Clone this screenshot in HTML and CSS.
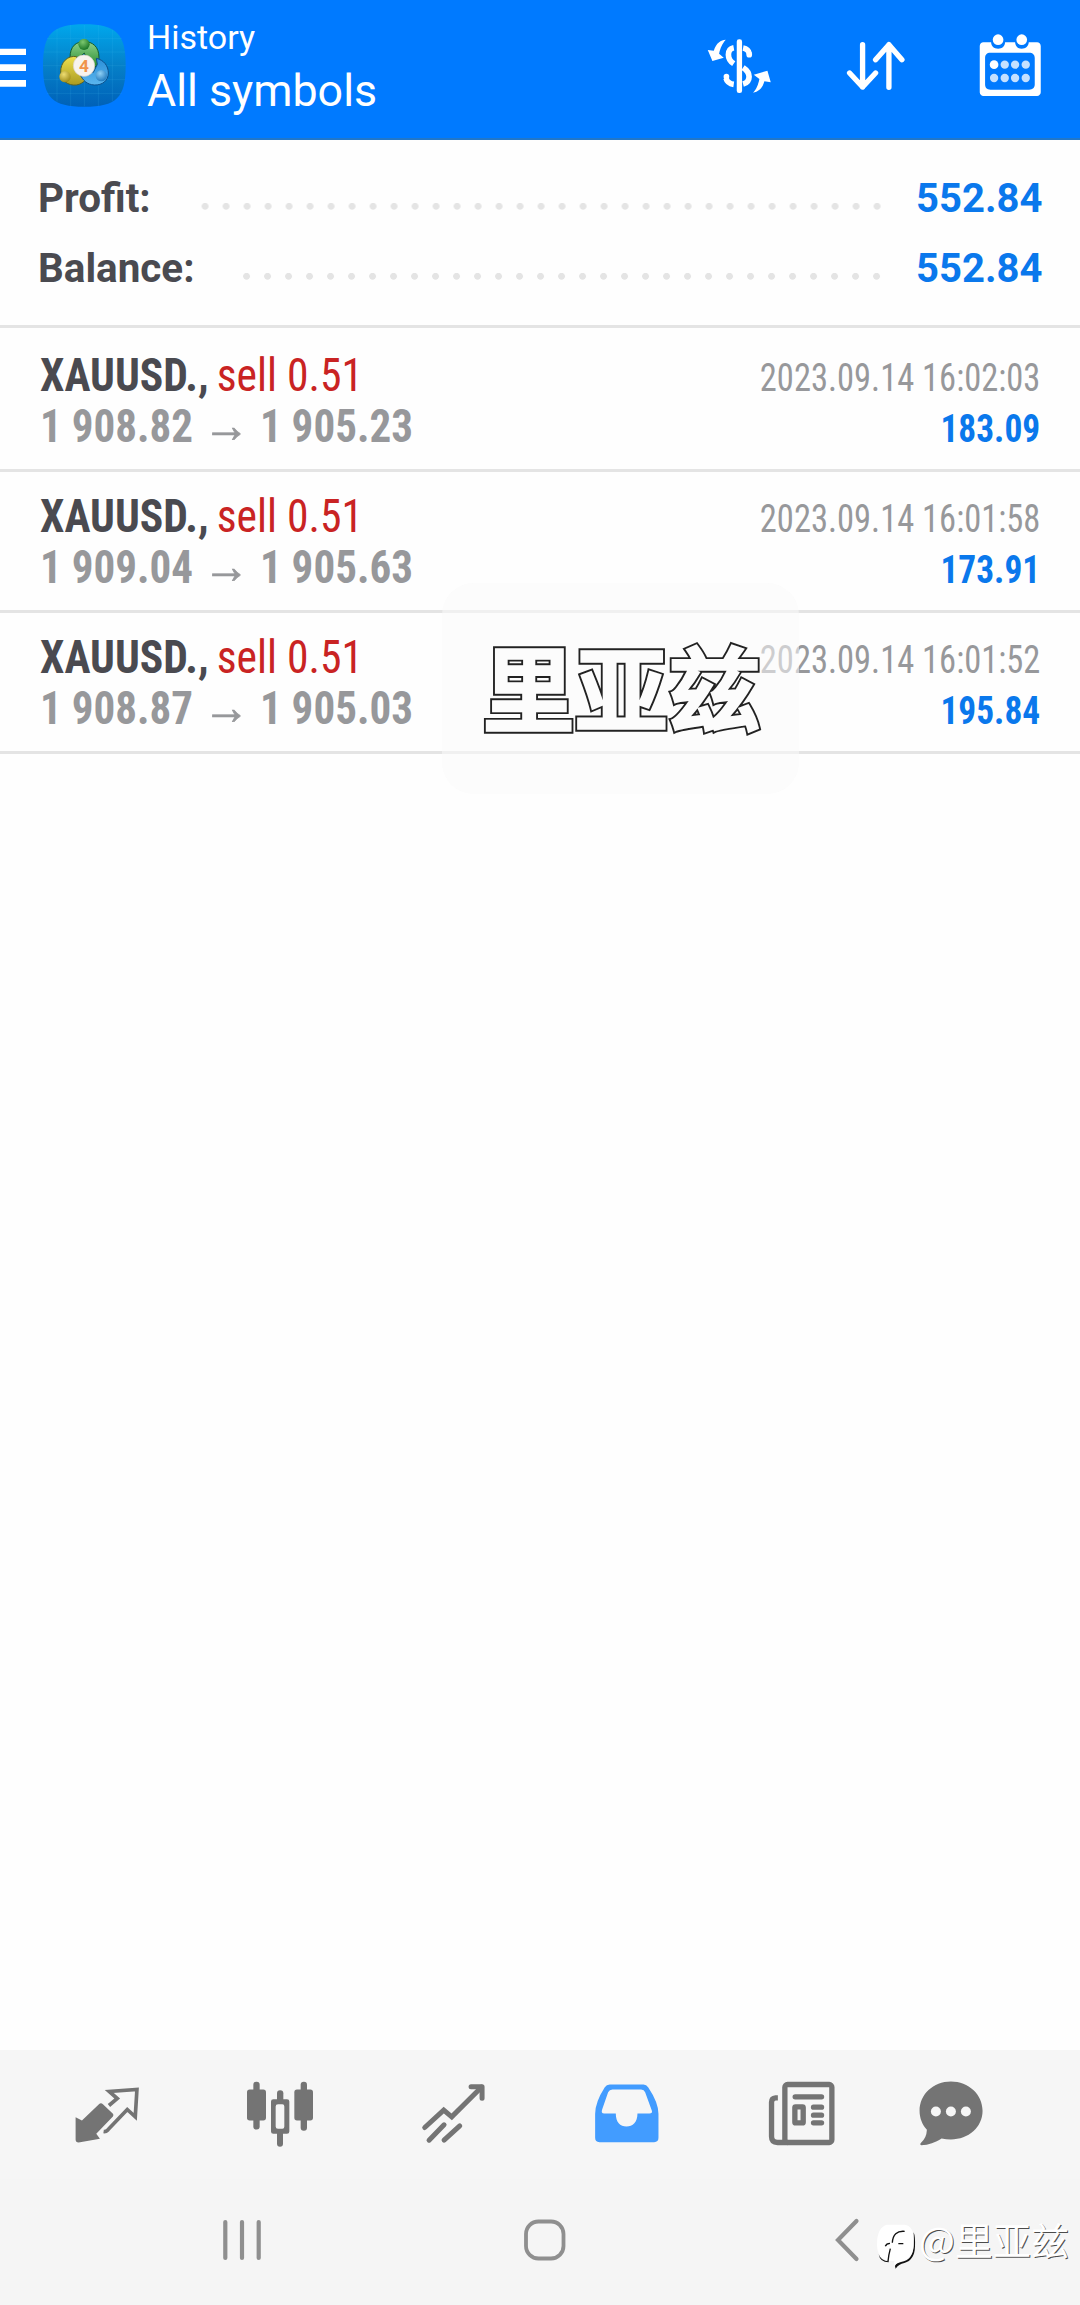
FILE: index.html
```html
<!DOCTYPE html>
<html lang="en">
<head>
<meta charset="utf-8">
<title>History</title>
<link rel="stylesheet" href="styles.css">
</head>
<body>
<div class="app">
  <header class="appbar">
    <svg class="menu" viewBox="0 132 78 144"><path fill="#fff" d="M0 146h78v19H0zM0 193h78v20H0zM0 240h78v20H0z"/></svg>
    <svg class="logo" viewBox="38 43 249 249">
      <defs>
        <linearGradient id="tile" x1="0" y1="0" x2="0" y2="1"><stop offset="0" stop-color="#00a7ec"/><stop offset=".5" stop-color="#0580c8"/><stop offset="1" stop-color="#0061b8"/></linearGradient>
        <linearGradient id="green" x1="0" y1="0" x2="0" y2="1"><stop offset="0" stop-color="#8fd18a"/><stop offset="1" stop-color="#238a2c"/></linearGradient>
        <linearGradient id="gold" x1="0" y1="0" x2="0" y2="1"><stop offset="0" stop-color="#efe04e"/><stop offset="1" stop-color="#a99a20"/></linearGradient>
        <linearGradient id="sky" x1="0" y1="0" x2="0" y2="1"><stop offset="0" stop-color="#2b8fd8"/><stop offset="1" stop-color="#5bb6ee"/></linearGradient>
        <radialGradient id="gb" cx=".4" cy=".3" r=".8"><stop offset="0" stop-color="#7cc86f"/><stop offset="1" stop-color="#0c6a1c"/></radialGradient>
        <radialGradient id="yb" cx=".4" cy=".3" r=".8"><stop offset="0" stop-color="#eedd72"/><stop offset="1" stop-color="#94820f"/></radialGradient>
        <radialGradient id="bb" cx=".4" cy=".3" r=".8"><stop offset="0" stop-color="#8fd0f5"/><stop offset="1" stop-color="#1470b8"/></radialGradient>
      </defs>
      <path fill="url(#tile)" d="M162 44C258 44 286 72 286 168S258 291 162 291 38 264 38 168 66 44 162 44z"/>
      <path fill="none" stroke="#4cc0f0" stroke-opacity=".22" stroke-width="2" d="M80 58v218M121 46v244M162 46v244M204 46v244M246 60v214M50 86h224M40 127h244M38 168h248M40 210h244M50 251h224"/>
      <path fill="url(#green)" stroke="#165c2a" stroke-width="3" d="M119 145C119 108 138 96 162 96s44 14 44 48c0 16-6 24-15 31l-20-23-9-22-12 10-18 8z"/>
      <path fill="url(#gold)" stroke="#5d6322" stroke-width="3" d="M139 141c-27-5-49 17-48 47 0 24 22 41 47 38 13-2 20-8 26-14l-22-23z"/>
      <path fill="url(#sky)" stroke="#0c4f8a" stroke-width="3" d="M198 146c23 5 36 23 36 44 0 23-18 37-42 36-22-1-36-15-43-33l40-5 12-24z"/>
      <circle cx="161" cy="104" r="17" fill="url(#gb)"/>
      <circle cx="104" cy="201" r="17" fill="url(#yb)"/>
      <circle cx="213" cy="198" r="17" fill="url(#bb)"/>
      <circle cx="161" cy="168" r="32" fill="#f7f3ee" stroke="#d8d2c8" stroke-width="2"/>
      <text class="logo-digit" x="161" y="187" text-anchor="middle">4</text>
    </svg>
    <div class="titles">
      <div class="title">History</div>
      <div class="subtitle">All symbols</div>
    </div>
    <div class="actions">
      <svg viewBox="69.75 102 216 216" fill="#fff">
        <path d="M138 119c-15 1-28 9-36 33l-18-2 14 33 34-10-14-12c4-18 9-29 20-42z"/>
        <path d="M220 278c15-3 28-12 34-34l19 3-10-35-41 12 17 13c-4 18-8 29-19 41z"/>
        <rect x="171" y="118" width="16" height="161" rx="7"/>
        <path fill="none" stroke="#fff" stroke-width="17" d="M162 143c-11 2-16 9-16 21 0 13 7 21 16 27M190 144c11 2 17 8 19 18M190 203c12 8 18 14 18 27 0 12-7 19-18 22M162 253c-14-2-21-10-23-18"/>
        <circle cx="208.500" cy="164" r="8.500"/><circle cx="140" cy="230" r="8.500"/>
      </svg>
      <svg viewBox="476.25 102 216 216" fill="none" stroke="#fff" stroke-width="16" stroke-linecap="round" stroke-linejoin="round"><path d="M547 134v127M508 219l39 42 39-42M626 262V134M586 179l40-45 39 45"/></svg>
      <svg viewBox="882.75 102 216 216">
        <path fill="#fff" fill-rule="evenodd" d="M911 127h23c1 12 8 19 21 19s20-7 21-19h30c1 12 8 19 20 19s20-7 21-19h25c6 0 11 5 11 11v139c0 6-5 11-11 11H911c-6 0-11-5-11-11V138c0-6 5-11 11-11zm21 31c-11 0-16 6-16 16v79c0 10 5 16 16 16h116c11 0 17-6 17-16v-79c0-10-6-16-17-16z"/>
        <circle cx="955" cy="119" r="16" fill="#fff"/><circle cx="1026" cy="119" r="16" fill="#fff"/>
        <circle cx="943" cy="194" r="13" fill="#fff"/>
        <g fill="#c4e0ff"><circle cx="975" cy="194" r="12.500"/><circle cx="1006" cy="194" r="12.500"/><circle cx="1038" cy="194" r="12.500"/><circle cx="943" cy="234" r="12.500"/><circle cx="975" cy="234" r="12.500"/><circle cx="1006" cy="234" r="12.500"/><circle cx="1038" cy="234" r="12.500"/></g>
      </svg>
    </div>
  </header>

  <section class="summary">
    <div class="sum-row"><span class="sum-label">Profit:</span><span class="dots"></span><span class="sum-value">552.84</span></div>
    <div class="sum-row"><span class="sum-label">Balance:</span><span class="dots"></span><span class="sum-value">552.84</span></div>
  </section>

  <main class="deals">
    <article class="deal">
      <div class="line"><span class="name"><b>XAUUSD.,</b> <span class="side">sell 0.51</span></span><span class="date">2023.09.14 16:02:03</span></div>
      <div class="line"><span class="price">1 908.82 <span class="arrow">→</span> 1 905.23</span><span class="profit">183.09</span></div>
    </article>
    <article class="deal">
      <div class="line"><span class="name"><b>XAUUSD.,</b> <span class="side">sell 0.51</span></span><span class="date">2023.09.14 16:01:58</span></div>
      <div class="line"><span class="price">1 909.04 <span class="arrow">→</span> 1 905.63</span><span class="profit">173.91</span></div>
    </article>
    <article class="deal">
      <div class="line"><span class="name"><b>XAUUSD.,</b> <span class="side">sell 0.51</span></span><span class="date">2023.09.14 16:01:52</span></div>
      <div class="line"><span class="price">1 908.87 <span class="arrow">→</span> 1 905.03</span><span class="profit">195.84</span></div>
    </article>
  </main>

  <nav class="tabs">
    <svg viewBox="94.200 115.500 216 216">
      <path fill="#747474" d="M108 230l19 10 51-49q6-5 12 0l30 29q3 4 0 8l-50 52 11 15-64 11q-9 0-9-9z"/>
      <path fill="none" stroke="#747474" stroke-width="11" stroke-linejoin="miter" d="M208 195l25-21-24-21 83-6-5 82-24-22-58 61q-6 6-13 5"/>
    </svg>
    <svg viewBox="615 115.500 216 216" fill="#747474">
      <rect x="640" y="124" width="19" height="143" rx="9"/><rect x="621" y="147" width="57" height="93" rx="8"/>
      <rect x="782" y="124" width="19" height="147" rx="9"/><rect x="763" y="147" width="56" height="93" rx="8"/>
      <rect x="711" y="149" width="19" height="40" rx="9"/><rect x="711" y="270" width="18" height="49" rx="9"/>
      <path fill-rule="evenodd" d="M700 176h41q7 0 7 7v90q0 7-7 7h-41q-7 0-7-7v-90q0-7 7-7zm14 15q-7 0-7 7v60q0 7 7 7h13q6 0 6-7v-60q0-7-6-7z"/>
    </svg>
    <svg viewBox="1135.800 115.500 216 216" fill="none" stroke="#747474" stroke-width="15" stroke-linecap="round" stroke-linejoin="round">
      <path stroke-linejoin="miter" d="M1153 261l57-52 24 20 89-89"/><path d="M1292 139h33v34"/><path d="M1166 299l45-46M1211 299l47-43"/>
    </svg>
    <svg viewBox="156.600 115.500 216 216">
      <path fill="#429cff" fill-rule="evenodd" d="M210 132h101q9 0 14 8 31 46 31 80v72q0 13-13 13H179q-13 0-13-13v-72q0-35 29-80 5-8 15-8zm8 15q-9 0-13 8l-18 52q-4 12 6 12h35c0 26 13 39 32 39s33-13 33-39h36q10 0 7-9l-20-55q-3-8-12-8z"/>
    </svg>
    <svg viewBox="677.400 115.500 216 216" fill="none" stroke="#747474" stroke-width="16">
      <rect x="734" y="132" width="141" height="174" rx="8"/><path d="M742 306h-30q-18 0-18-18V185q0-12 12-13h7"/>
      <rect x="764" y="199" width="25" height="48" rx="2"/>
      <path stroke-linecap="round" d="M765 169h79M820 200h24M820 224h24M820 247h24"/>
    </svg>
    <svg viewBox="1125.300 115.500 216 216">
      <path fill="#747474" d="M1233 123c53 0 95 39 95 88s-42 86-95 86q-14 0-28-3c-19 12-38 20-61 20q-5-2-2-6 18-14 19-40c-14-15-22-35-22-57 0-49 41-88 94-88z"/>
      <g fill="#f6f6f6"><circle cx="1188" cy="213" r="15"/><circle cx="1233" cy="213" r="15"/><circle cx="1278" cy="213" r="15"/></g>
    </svg>
  </nav>

  <div class="sysbar">
    <svg viewBox="-24 -24 48 48" stroke="#8f8f8f" stroke-width="4.200" stroke-linecap="round"><path d="M-16.700-18v36M0-18v36M16.700-18v36"/></svg>
    <svg viewBox="-24 -24 48 48" fill="none" stroke="#8f8f8f" stroke-width="3.800"><rect x="-19" y="-18.500" width="37.500" height="37" rx="12.500"/></svg>
    <svg viewBox="-24 -24 48 48" fill="none" stroke="#8f8f8f" stroke-width="4.200" stroke-linecap="round"><path d="M9.500-19L-9 0 9.500 19"/></svg>
  </div>

  <div class="stamp" lang="zh">里亚兹</div>
  <div class="credit" lang="zh">
    <svg viewBox="230 132 120 138">
      <path fill="#111" d="M305 249q37-6 38-50V160q5 12 4 42-1 42-32 50-17 3-26 17-4-8-1-14zM238 226q7 20 30 21v3q-26 0-30-24z"/>
      <path fill="#fff" d="M263 137h52q31 3 28 55 0 45-33 54-17 2-24 16-3-9-1-16-54 2-52-54 1-47 30-55z"/>
      <path fill="none" stroke="#111" stroke-width="4" d="M316 157q-35-3-37 34M258 202q3-9 14-9M297 194h15M273 209q-5 18-7 38"/>
    </svg><span>@里亚兹</span>
  </div>
</div>
</body>
</html>
```
FILE: styles.css
```css
* { box-sizing: border-box; }
body { margin: 0; background: #fefefe; font-family: Roboto, "Liberation Sans", sans-serif; }
svg { display: block; flex: none; }

.app { position: relative; width: 1080px; height: 2305px; display: flex; flex-direction: column; overflow: hidden; background: #fefefe; }

.appbar { height: 140px; flex: none; display: flex; align-items: flex-start; background: #007aff; border-bottom: 2px solid #2277c8; color: #fff; }
.menu { width: 26px; height: 48px; margin-top: 44px; }
.logo { width: 83px; height: 83px; margin: 24px 0 0 17px; }
.logo-digit { font: 700 52px Roboto, sans-serif; fill: #f0934a; }
.titles { display: flex; flex-direction: column; gap: 7px; padding-top: 17px; margin-left: 21px; }
.title { font-size: 34px; line-height: 40px; }
.subtitle { font-size: 45px; line-height: 54px; transform: scaleX(.994); transform-origin: left; }
.actions { margin-left: auto; margin-right: 2px; height: 140px; display: grid; grid-template-columns: repeat(3, 135.5px); place-items: center; flex: none; }
.actions svg { width: 72px; height: 72px; }

.summary { flex: none; padding: 23px 37px 22px 37.5px; border-bottom: 3px solid #e4e4e4; }
.sum-row { display: flex; height: 70px; line-height: 70px; font-size: 41px; font-weight: 700; color: #4a4a50; }
.sum-label { transform: scaleX(.985); transform-origin: left; }
.dots { flex: 1; margin: 0 26px 0 36px; background: radial-gradient(circle at 10.5px 43.3px, #e4e4e4 3px, transparent 3.8px) right top / 21px 70px repeat-x; }
.sum-value { color: #0a78ec; transform: scaleX(.976); transform-origin: right; }

.deals { flex: 1; font-family: "Roboto Condensed", Roboto, sans-serif; }
.deal { padding: 19px 39.5px 20px 40px; border-bottom: 3px solid #e4e4e4; }
.deal:first-child { padding-top: 22px; }
.line { display: flex; justify-content: space-between; align-items: baseline; height: 50px; line-height: 50px; white-space: pre; }
.line + .line { height: 49px; line-height: 48px; }
.name, .price { font-size: 46px; transform-origin: left; }
.name { color: #4a4a50; transform: scaleX(.947); }
.side { color: #c92323; margin-left: -2px; font-weight: 440; }
.price { color: #97989b; font-weight: 700; transform: scaleX(.937); }
.arrow { font: 400 50px/1 "Liberation Sans", sans-serif; -webkit-text-stroke: .7px; }
.date, .profit { font-size: 38.4px; line-height: 40px; transform-origin: right; }
.date { color: #97989b; transform: scaleX(.898); font-weight: 440; }
.profit { color: #0a78ec; font-weight: 700; transform: scaleX(.922); }

.tabs { flex: none; height: 129px; padding-left: 20.6px; display: grid; grid-template-columns: repeat(5, 173.6px) 125px; place-items: center; background: #f6f6f6; }
.tabs svg { width: 72px; height: 72px; }

.sysbar { flex: none; height: 126px; padding: 0 0 4px 90.8px; display: grid; grid-template-columns: repeat(3, 302.5px); place-items: center; background: #f5f5f5; }
.sysbar svg { width: 48px; height: 48px; }

/* Name stamp floating over the list: dark outline with a light face */
.stamp { position: absolute; left: 442px; top: 583px; width: 357px; height: 211px; padding: 34px 0 0 40px; border-radius: 32px; background: rgba(250, 250, 250, .55); font: 700 93px/135px "Noto Sans CJK SC", sans-serif; white-space: nowrap; color: #fcfcfc; -webkit-text-stroke: 5.4px #222; paint-order: stroke fill; }
.stamp::after { content: "里亚兹"; position: absolute; left: 40px; top: 34px; -webkit-text-stroke: 1.6px #fcfcfc; }

.credit { position: absolute; left: 875.500px; top: 2211px; display: flex; font: 400 38px/55px "Noto Sans CJK SC", sans-serif; color: #fff; text-shadow: 1px 1px 0 rgba(0, 0, 0, .7); }
.credit svg { width: 40px; height: 46px; margin: 12px 3.5px 0 0; }
```
